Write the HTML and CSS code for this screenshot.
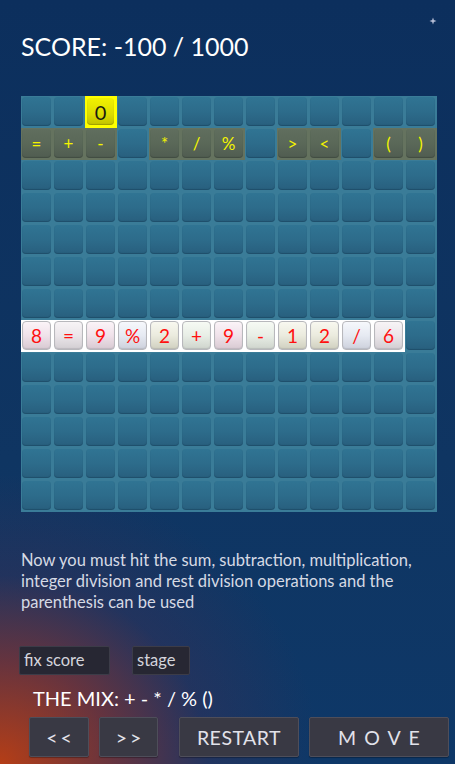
FILE: index.html
```html
<!DOCTYPE html>
<html lang="en">
<head>
<meta charset="utf-8">
<title>Math Mix</title>
<link rel="stylesheet" href="styles.css">
</head>
<body>
<div class="page">
  <svg class="star" width="8" height="8" viewBox="0 0 8 8"><path d="M4 0.5 L4.9 3.1 L7.5 4 L4.9 4.9 L4 7.5 L3.1 4.9 L0.5 4 L3.1 3.1 Z" fill="#b4bcd4"/></svg>
  <h1 class="score">SCORE: -100 / 1000</h1>
  <div class="board">
    <!-- row 0 -->
    <div class="cell"><span class="tile"></span></div>
    <div class="cell"><span class="tile"></span></div>
    <div class="cell hi"><span class="tile">0</span></div>
    <div class="cell"><span class="tile"></span></div>
    <div class="cell"><span class="tile"></span></div>
    <div class="cell"><span class="tile"></span></div>
    <div class="cell"><span class="tile"></span></div>
    <div class="cell"><span class="tile"></span></div>
    <div class="cell"><span class="tile"></span></div>
    <div class="cell"><span class="tile"></span></div>
    <div class="cell"><span class="tile"></span></div>
    <div class="cell"><span class="tile"></span></div>
    <div class="cell"><span class="tile"></span></div>
    <!-- row 1 -->
    <div class="cell op"><span class="tile">=</span></div>
    <div class="cell op"><span class="tile">+</span></div>
    <div class="cell op"><span class="tile">-</span></div>
    <div class="cell"><span class="tile"></span></div>
    <div class="cell op"><span class="tile">*</span></div>
    <div class="cell op"><span class="tile">/</span></div>
    <div class="cell op"><span class="tile">%</span></div>
    <div class="cell"><span class="tile"></span></div>
    <div class="cell op"><span class="tile">&gt;</span></div>
    <div class="cell op"><span class="tile">&lt;</span></div>
    <div class="cell"><span class="tile"></span></div>
    <div class="cell op"><span class="tile">(</span></div>
    <div class="cell op"><span class="tile">)</span></div>
    <!-- rows 2-6 -->
    <div class="cell"><span class="tile"></span></div><div class="cell"><span class="tile"></span></div><div class="cell"><span class="tile"></span></div><div class="cell"><span class="tile"></span></div><div class="cell"><span class="tile"></span></div><div class="cell"><span class="tile"></span></div><div class="cell"><span class="tile"></span></div><div class="cell"><span class="tile"></span></div><div class="cell"><span class="tile"></span></div><div class="cell"><span class="tile"></span></div><div class="cell"><span class="tile"></span></div><div class="cell"><span class="tile"></span></div><div class="cell"><span class="tile"></span></div>
    <div class="cell"><span class="tile"></span></div><div class="cell"><span class="tile"></span></div><div class="cell"><span class="tile"></span></div><div class="cell"><span class="tile"></span></div><div class="cell"><span class="tile"></span></div><div class="cell"><span class="tile"></span></div><div class="cell"><span class="tile"></span></div><div class="cell"><span class="tile"></span></div><div class="cell"><span class="tile"></span></div><div class="cell"><span class="tile"></span></div><div class="cell"><span class="tile"></span></div><div class="cell"><span class="tile"></span></div><div class="cell"><span class="tile"></span></div>
    <div class="cell"><span class="tile"></span></div><div class="cell"><span class="tile"></span></div><div class="cell"><span class="tile"></span></div><div class="cell"><span class="tile"></span></div><div class="cell"><span class="tile"></span></div><div class="cell"><span class="tile"></span></div><div class="cell"><span class="tile"></span></div><div class="cell"><span class="tile"></span></div><div class="cell"><span class="tile"></span></div><div class="cell"><span class="tile"></span></div><div class="cell"><span class="tile"></span></div><div class="cell"><span class="tile"></span></div><div class="cell"><span class="tile"></span></div>
    <div class="cell"><span class="tile"></span></div><div class="cell"><span class="tile"></span></div><div class="cell"><span class="tile"></span></div><div class="cell"><span class="tile"></span></div><div class="cell"><span class="tile"></span></div><div class="cell"><span class="tile"></span></div><div class="cell"><span class="tile"></span></div><div class="cell"><span class="tile"></span></div><div class="cell"><span class="tile"></span></div><div class="cell"><span class="tile"></span></div><div class="cell"><span class="tile"></span></div><div class="cell"><span class="tile"></span></div><div class="cell"><span class="tile"></span></div>
    <div class="cell"><span class="tile"></span></div><div class="cell"><span class="tile"></span></div><div class="cell"><span class="tile"></span></div><div class="cell"><span class="tile"></span></div><div class="cell"><span class="tile"></span></div><div class="cell"><span class="tile"></span></div><div class="cell"><span class="tile"></span></div><div class="cell"><span class="tile"></span></div><div class="cell"><span class="tile"></span></div><div class="cell"><span class="tile"></span></div><div class="cell"><span class="tile"></span></div><div class="cell"><span class="tile"></span></div><div class="cell"><span class="tile"></span></div>
    <!-- row 7: expression -->
    <div class="cell ex"><span class="tile pink">8</span></div>
    <div class="cell ex"><span class="tile pale">=</span></div>
    <div class="cell ex"><span class="tile pink">9</span></div>
    <div class="cell ex"><span class="tile blue">%</span></div>
    <div class="cell ex"><span class="tile beige">2</span></div>
    <div class="cell ex"><span class="tile green">+</span></div>
    <div class="cell ex"><span class="tile pink">9</span></div>
    <div class="cell ex"><span class="tile green">-</span></div>
    <div class="cell ex"><span class="tile beige">1</span></div>
    <div class="cell ex"><span class="tile beige">2</span></div>
    <div class="cell ex"><span class="tile blue">/</span></div>
    <div class="cell ex"><span class="tile pale">6</span></div>
    <div class="cell"><span class="tile"></span></div>
    <!-- rows 8-12 -->
    <div class="cell"><span class="tile"></span></div><div class="cell"><span class="tile"></span></div><div class="cell"><span class="tile"></span></div><div class="cell"><span class="tile"></span></div><div class="cell"><span class="tile"></span></div><div class="cell"><span class="tile"></span></div><div class="cell"><span class="tile"></span></div><div class="cell"><span class="tile"></span></div><div class="cell"><span class="tile"></span></div><div class="cell"><span class="tile"></span></div><div class="cell"><span class="tile"></span></div><div class="cell"><span class="tile"></span></div><div class="cell"><span class="tile"></span></div>
    <div class="cell"><span class="tile"></span></div><div class="cell"><span class="tile"></span></div><div class="cell"><span class="tile"></span></div><div class="cell"><span class="tile"></span></div><div class="cell"><span class="tile"></span></div><div class="cell"><span class="tile"></span></div><div class="cell"><span class="tile"></span></div><div class="cell"><span class="tile"></span></div><div class="cell"><span class="tile"></span></div><div class="cell"><span class="tile"></span></div><div class="cell"><span class="tile"></span></div><div class="cell"><span class="tile"></span></div><div class="cell"><span class="tile"></span></div>
    <div class="cell"><span class="tile"></span></div><div class="cell"><span class="tile"></span></div><div class="cell"><span class="tile"></span></div><div class="cell"><span class="tile"></span></div><div class="cell"><span class="tile"></span></div><div class="cell"><span class="tile"></span></div><div class="cell"><span class="tile"></span></div><div class="cell"><span class="tile"></span></div><div class="cell"><span class="tile"></span></div><div class="cell"><span class="tile"></span></div><div class="cell"><span class="tile"></span></div><div class="cell"><span class="tile"></span></div><div class="cell"><span class="tile"></span></div>
    <div class="cell"><span class="tile"></span></div><div class="cell"><span class="tile"></span></div><div class="cell"><span class="tile"></span></div><div class="cell"><span class="tile"></span></div><div class="cell"><span class="tile"></span></div><div class="cell"><span class="tile"></span></div><div class="cell"><span class="tile"></span></div><div class="cell"><span class="tile"></span></div><div class="cell"><span class="tile"></span></div><div class="cell"><span class="tile"></span></div><div class="cell"><span class="tile"></span></div><div class="cell"><span class="tile"></span></div><div class="cell"><span class="tile"></span></div>
    <div class="cell"><span class="tile"></span></div><div class="cell"><span class="tile"></span></div><div class="cell"><span class="tile"></span></div><div class="cell"><span class="tile"></span></div><div class="cell"><span class="tile"></span></div><div class="cell"><span class="tile"></span></div><div class="cell"><span class="tile"></span></div><div class="cell"><span class="tile"></span></div><div class="cell"><span class="tile"></span></div><div class="cell"><span class="tile"></span></div><div class="cell"><span class="tile"></span></div><div class="cell"><span class="tile"></span></div><div class="cell"><span class="tile"></span></div>
  </div>
  <p class="info">Now you must hit the sum, subtraction, multiplication, integer division and rest division operations and the parenthesis can be used</p>
  <div class="fields">
    <div class="field fix">fix score</div>
    <div class="field stage">stage</div>
  </div>
  <div class="mix">THE MIX: + - * / % ()</div>
  <div class="buttons">
    <button class="btn prev">&lt;&lt;</button>
    <button class="btn next">&gt;&gt;</button>
    <button class="btn restart">RESTART</button>
    <button class="btn move">MOVE</button>
  </div>
</div>
</body>
</html>
```

FILE: styles.css
```css
html, body {
  margin: 0;
  padding: 0;
  height: 100%;
}
body {
  font-family: Lato, "Open Sans", sans-serif;
  background-color: #0f3461;
  background-image:
    radial-gradient(ellipse 320px 290px at 0% 100%, rgba(190, 62, 18, 0.95) 0%, rgba(140, 50, 45, 0.7) 35%, rgba(70, 45, 80, 0.35) 65%, rgba(15, 52, 97, 0) 100%),
    linear-gradient(180deg, #0c2f5d 0%, #0f3562 60%, #0e3868 100%);
  color: #fff;
  overflow: hidden;
}
.page {
  position: relative;
  height: 764px;
  padding: 31px 0 0 0;
  box-sizing: border-box;
}
.star {
  position: absolute;
  left: 429px;
  top: 17px;
}
.score {
  margin: 0 0 0 21px;
  font-size: 25px;
  font-weight: 400;
  line-height: 30px;
  color: #ffffff;
}
.board {
  margin: 35px 0 0 21px;
  width: 416px;
  height: 416px;
  display: grid;
  grid-template-columns: repeat(13, 32px);
  grid-template-rows: repeat(13, 32px);
  background: #3a7c98;
}
.cell {
  padding: 1px 2px 2px 1px;
  box-sizing: border-box;
  display: flex;
}
.tile {
  flex: 1;
  border-radius: 4px;
  background: linear-gradient(180deg, #30749394 0%, #2d6c8b 50%, #285f7e 100%);
  background: linear-gradient(180deg, #307493 0%, #2d6c8b 50%, #285f7e 100%);
  box-shadow: inset 0 -1px 1px rgba(10, 40, 60, 0.3);
  display: flex;
  align-items: center;
  justify-content: center;
  font-size: 16px;
  line-height: 1;
}
.op {
  background: #65735f;
}
.op .tile {
  background: linear-gradient(180deg, #606e5e 0%, #5a6858 50%, #505c51 100%);
  box-shadow: inset 0 -1px 1px rgba(30, 40, 30, 0.3);
  color: #f4f400;
  font-size: 17px;
}
.hi {
  background: #ffff00;
  padding: 2px 3px 3px 2px;
}
.hi .tile {
  background: linear-gradient(180deg, #f2f200 0%, #dcdc00 60%, #c2c200 100%);
  box-shadow: inset 0 -1px 1px rgba(90, 90, 0, 0.35);
  color: #1a1a10;
  font-size: 20px;
}
.ex {
  background: #ffffff;
}
.ex .tile {
  border: 1px solid #b8b8bc;
  color: #ff1010;
  font-size: 19px;
  box-shadow: inset 0 -1px 1px rgba(120, 120, 130, 0.25);
}
.ex .pink {
  background: linear-gradient(180deg, #fbf4f8 0%, #f0e2ea 50%, #d8cad2 100%);
}
.ex .pale {
  background: linear-gradient(180deg, #f7f4f6 0%, #ebe6ea 50%, #d2ced2 100%);
}
.ex .blue {
  background: linear-gradient(180deg, #f6f8fc 0%, #e6eaf2 50%, #cdd1dc 100%);
}
.ex .beige {
  background: linear-gradient(180deg, #f8f8f0 0%, #ebebde 50%, #d0d0c0 100%);
}
.ex .green {
  background: linear-gradient(180deg, #f6faf4 0%, #e8eee6 50%, #ced4cc 100%);
}
.info {
  margin: 38px 0 0 21px;
  width: 416px;
  font-size: 16.5px;
  line-height: 21px;
  color: #d6dae4;
}
.fields {
  margin: 33px 0 0 19px;
  display: flex;
  gap: 22px;
}
.field {
  height: 29px;
  box-sizing: border-box;
  border: 1px solid #3c3c48;
  border-radius: 2px;
  background: #272733;
  color: #d4d4dc;
  font-size: 16.5px;
  line-height: 27px;
  padding: 0 4px;
}
.fix {
  width: 91px;
}
.stage {
  width: 58px;
}
.mix {
  margin: 11px 0 0 33px;
  font-size: 20px;
  line-height: 24px;
  color: #ffffff;
}
.buttons {
  margin: 7px 0 0 29px;
  display: flex;
}
.btn {
  height: 40px;
  box-sizing: border-box;
  border: 1px solid #4e4e5a;
  border-radius: 2px;
  background: #393944;
  color: #e2e2ea;
  font-family: Lato, "Open Sans", sans-serif;
  font-size: 19.5px;
  padding: 0;
  margin: 0;
  box-shadow: 0 1px 1px rgba(0, 0, 0, 0.3);
}
.prev {
  width: 60px;
  letter-spacing: 3px;
  text-indent: 3px;
}
.next {
  width: 59px;
  margin-left: 10px;
  letter-spacing: 3px;
  text-indent: 3px;
}
.restart {
  width: 120px;
  margin-left: 21px;
  letter-spacing: 0.5px;
}
.move {
  width: 140px;
  margin-left: 10px;
  letter-spacing: 8px;
  text-indent: 8px;
}
```
